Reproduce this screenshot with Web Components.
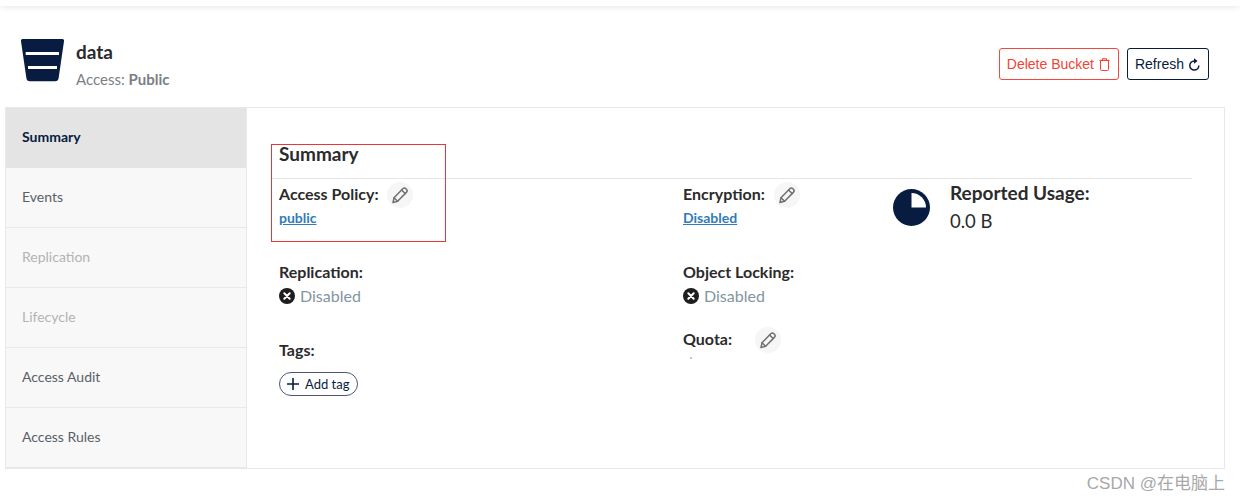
<!DOCTYPE html>
<html lang="en">
<head>
<meta charset="utf-8">
<title>Bucket summary</title>
<style>
  html, body { margin: 0; background: #fff; }
  body { width: 1240px; height: 501px; overflow: hidden; position: relative; font-family: Lato, "Noto Sans CJK SC", sans-serif; color: #1f1f1f; }
</style>
</head>
<body>
<bucket-page></bucket-page>
<script>
// small helper, every element gets its own open shadow root
const make = (name, html, setup) => {
    customElements.define(name, class extends HTMLElement {
        constructor() {
            super();
            this.attachShadow({ mode: 'open' }).innerHTML = html;
        }
        connectedCallback() {
            if (setup) setup(this);
        }
    });
};

const PENCIL = `<svg width="20" height="20" viewBox="0 0 20 20" fill="none" stroke="#707070" stroke-width="1.5" stroke-linejoin="round" stroke-linecap="round"><path d="M3 17.500l1-4.700 8.800-9a2.200 2.200 0 0 1 3.100 0l.5.500a2.200 2.200 0 0 1 0 3.100l-8.800 8.900z"/><path d="M4 12.800l3.600 3.500M11.600 5l3.500 3.500"/></svg>`;

make('edit-button', `
<style>
  :host { display: inline-flex; align-items: center; justify-content: center; width: 26px; height: 26px; border-radius: 50%; background: #f6f6f6; }
  svg { display: block; }
</style>
${PENCIL}`);

make('action-button', `
<style>
  :host { display: inline-flex; align-items: center; box-sizing: border-box; height: 32px; padding: 0 8px 0 7px; gap: 5px; border: 1px solid currentColor; border-radius: 3px; font: 14px "Liberation Sans", Arial, sans-serif; white-space: nowrap; }
  :host([danger]) { color: #f44336; border-color: #f4483d; }
  :host(:not([danger])) { color: #081c42; }
  ::slotted(svg) { display: block; }
</style>
<slot></slot><slot name="icon"></slot>`);

make('bucket-header', `
<style>
  :host { display: flex; align-items: flex-start; justify-content: space-between; height: 101px; box-sizing: border-box; padding: 33px 31px 0 21px; }
  .id { display: flex; gap: 12px; }
  .logo { display: block; width: 43px; height: 43px; }
  h1 { margin: 0; font-size: 19px; font-weight: 700; line-height: 24px; color: #2b2b2b; padding-top: 1px; }
  p { margin: 5px 0 0; font-size: 15px; line-height: 20px; color: #7b7f85; }
  b { font-weight: 700; }
  .actions { display: flex; gap: 8px; padding-top: 9px; }
</style>
<div class="id">
  <svg class="logo" viewBox="0 0 43 43"><path fill="#081c42" d="M2 0h39a2 2 0 0 1 2 2.300l-5.400 37a3.500 3.500 0 0 1-3.500 3H8.900a3.500 3.500 0 0 1-3.500-3L0 2.300A2 2 0 0 1 2 0z"/><rect x="4.700" y="13" width="33.300" height="3" fill="#fff"/><rect x="7" y="27" width="29" height="3" fill="#fff"/></svg>
  <div><h1>data</h1><p>Access: <b>Public</b></p></div>
</div>
<div class="actions">
  <action-button danger>Delete Bucket
    <svg slot="icon" width="11" height="13" viewBox="0 0 11 13" fill="none" stroke="#f44336" stroke-width="1"><path d="M1.500 2.500v8.800a1.200 1.200 0 0 0 1.200 1.200h5.600a1.200 1.200 0 0 0 1.200-1.200V2.500z"/><path d="M.5 2.300h10M3.500 2V.7h4V2"/></svg>
  </action-button>
  <action-button>Refresh
    <svg slot="icon" width="11" height="13" viewBox="0 0 11 13" fill="none" stroke="#081c42" stroke-width="1.500"><path d="M9.800 7.500a4.500 4.500 0 1 1-4.500-4.500"/><path fill="#081c42" stroke="none" d="M5 .2l3.600 2.800L5 5.800z"/></svg>
  </action-button>
</div>`);

make('tab-item', `
<style>
  :host { display: flex; align-items: center; box-sizing: border-box; height: 60px; padding: 0 16px 2px; font-size: 14px; color: #5a6068; background: #f8f8f8; border-bottom: 1px solid #e8e8e8; }
  :host([active]) { background: #e4e4e4; color: #081c42; font-weight: 700; border-bottom-color: #e4e4e4; }
  :host([disabled]) { color: #b3b3b3; }
</style>
<slot></slot>`);

make('side-tabs', `
<style>
  :host { display: flex; flex-direction: column; width: 241px; flex: none; box-sizing: border-box; border-right: 1px solid #e8e8e8; }
</style>
<slot></slot>`);

make('info-field', `
<style>
  :host { display: block; }
  .label { display: flex; align-items: center; gap: 8px; height: 26px; font-size: 16px; font-weight: 700; color: #2b2b2b; }
  #t { padding-bottom: 4px; }
  .value { display: flex; flex-direction: column; align-items: flex-start; font-size: 14px; line-height: 20px; }
</style>
<div class="label"><span id="t"></span><slot name="edit"></slot></div>
<div class="value"><slot></slot></div>`, el => {
    el.shadowRoot.getElementById('t').textContent = el.getAttribute('label');
});

make('policy-link', `
<style>
  :host { display: inline; color: #2f7cb8; font-size: 14px; font-weight: 700; text-decoration: underline; }
</style>
<slot></slot>`);

make('off-state', `
<style>
  :host { display: inline-flex; align-items: center; gap: 5px; font-size: 16px; color: #83959f; line-height: 20px; }
  svg { display: block; }
</style>
<svg width="16" height="16" viewBox="0 0 16 16"><circle cx="8" cy="8" r="8" fill="#1e1e1e"/><path d="M5.300 5.300l5.400 5.400M10.700 5.300l-5.400 5.400" stroke="#fff" stroke-width="2" stroke-linecap="round"/></svg>
<slot></slot>`);

make('add-tag', `
<style>
  :host { display: inline-flex; align-items: center; box-sizing: border-box; gap: 6px; height: 24px; padding: 0 8px 0 7px; border: 1px solid #49567a; border-radius: 12px; font-size: 13px; color: #081c42; }
  svg { display: block; }
</style>
<svg width="12" height="12" viewBox="0 0 12 12" stroke="#081c42" stroke-width="1.600"><path d="M6 0v12M0 6h12"/></svg>
<slot></slot>`);

make('usage-block', `
<style>
  :host { display: flex; gap: 20px; align-items: flex-start; }
  svg { display: block; width: 37px; height: 37px; margin-top: 7px; flex: none; }
  h3 { margin: 0; font-size: 19px; line-height: 22px; font-weight: 700; color: #2b2b2b; }
  p { margin: 5px 0 0; font-size: 18.500px; line-height: 24px; color: #2b2b2b; }
</style>
<svg viewBox="0 0 37 37"><circle cx="18.500" cy="18.500" r="18.500" fill="#081c42"/><path d="M18.500 4a14.500 14.500 0 0 1 14.500 14.500H18.500z" fill="#fff"/></svg>
<div><h3>Reported Usage:</h3><p>0.0 B</p></div>`);

make('summary-panel', `
<style>
  :host { display: block; flex: 1; min-width: 0; box-sizing: border-box; padding: 33px 32px 0 24px; position: relative; }
  h2 { margin: 0; height: 38px; box-sizing: border-box; padding-left: 8px; font-size: 19px; line-height: 26px; font-weight: 700; color: #2b2b2b; border-bottom: 1px solid #e6e6e6; }
  .grid { display: grid; grid-template-columns: 404px 210px 1fr; padding: 3px 0 0 8px; }
  .stack { display: flex; flex-direction: column; }
  .stack > :not(:first-child) { margin-top: 32px; }
  .stack > .near { margin-top: 21px; }
  add-tag { margin-top: 8px; }
  .dot { width: 2px; height: 2px; margin: 4px 0 0 7px; background: #a9b4bb; border-radius: 50%; }
  /* red box drawn over the screenshot */
  .mark { position: absolute; left: 24px; top: 36px; width: 173px; height: 96px; border: 1px solid #e8373a; }
</style>
<h2>Summary</h2>
<div class="grid">
  <div class="stack">
    <info-field label="Access Policy:"><edit-button slot="edit"></edit-button><policy-link>public</policy-link></info-field>
    <info-field label="Replication:"><off-state>Disabled</off-state></info-field>
    <info-field label="Tags:"><add-tag>Add tag</add-tag></info-field>
  </div>
  <div class="stack">
    <info-field label="Encryption:"><edit-button slot="edit" style="margin-left:1px"></edit-button><policy-link>Disabled</policy-link></info-field>
    <info-field label="Object Locking:"><off-state>Disabled</off-state></info-field>
    <info-field class="near" label="Quota:"><edit-button slot="edit" style="margin-left:15px"></edit-button><div class="dot"></div></info-field>
  </div>
  <usage-block></usage-block>
</div>
<div class="mark"></div>`);

make('bucket-page', `
<style>
  :host { display: block; }
  .top { height: 6px; background: #fff; box-shadow: 0 1px 6px rgba(0,0,0,.1); }
  .panel { display: flex; height: 362px; box-sizing: border-box; margin: 0 15px 0 5px; border: 1px solid #e8e8e8; }
  .mark { position: absolute; right: 15px; top: 469px; font: 17px "Liberation Sans", "Noto Sans CJK SC", sans-serif; color: #a8a8a8; }
</style>
<div class="top"></div>
<bucket-header></bucket-header>
<div class="panel">
  <side-tabs>
    <tab-item active>Summary</tab-item>
    <tab-item>Events</tab-item>
    <tab-item disabled>Replication</tab-item>
    <tab-item disabled>Lifecycle</tab-item>
    <tab-item>Access Audit</tab-item>
    <tab-item>Access Rules</tab-item>
  </side-tabs>
  <summary-panel></summary-panel>
</div>
<div class="mark">CSDN @在电脑上</div>`);
</script>
</body>
</html>
